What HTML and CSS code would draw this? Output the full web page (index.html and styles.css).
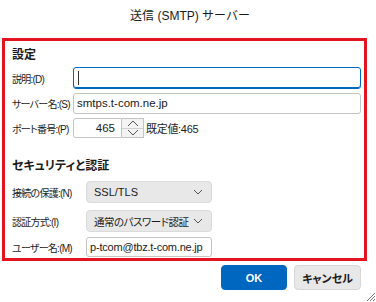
FILE: index.html
```html
<!DOCTYPE html>
<html lang="ja">
<head>
    <meta charset="UTF-8">
    <meta name="viewport" content="width=device-width, initial-scale=1.0">
    <title>送信 (SMTP) サーバー</title>
    <link rel="stylesheet" href="styles.css">
</head>
<body>
    <div class="dialog">
        <div class="title">送信 (SMTP) サーバー</div>

        <div class="panel">
            <div class="section-title">設定</div>

            <div class="row row-1">
                <label class="label">説明:(D)</label>
                <div class="input wide focused"><span class="caret"></span></div>
            </div>
            <div class="row row-2">
                <label class="label">サーバー名:(S)</label>
                <div class="input wide">smtps.t-com.ne.jp</div>
            </div>
            <div class="row row-3">
                <label class="label">ポート番号:(P)</label>
                <div class="input port">465</div>
                <div class="spinner">
                    <span class="spin-btn">
                        <svg width="12" height="7" viewBox="0 0 12 7"><path d="M1 6 L6 1 L11 6" fill="none" stroke="#555" stroke-width="1"/></svg>
                    </span>
                    <span class="spin-btn">
                        <svg width="12" height="7" viewBox="0 0 12 7"><path d="M1 1 L6 6 L11 1" fill="none" stroke="#555" stroke-width="1"/></svg>
                    </span>
                </div>
                <span class="default-port">既定値:465</span>
            </div>

            <div class="section-title second">セキュリティと認証</div>

            <div class="row row-sel">
                <label class="label label-long">接続の保護:(N)</label>
                <div class="select">
                    <span>SSL/TLS</span>
                    <svg class="chev" width="10" height="6" viewBox="0 0 10 6"><path d="M1 1 L5 5 L9 1" fill="none" stroke="#555" stroke-width="1"/></svg>
                </div>
            </div>
            <div class="row row-sel">
                <label class="label label-long">認証方式:(I)</label>
                <div class="select">
                    <span class="tight">通常のパスワード認証</span>
                    <svg class="chev" width="10" height="6" viewBox="0 0 10 6"><path d="M1 1 L5 5 L9 1" fill="none" stroke="#555" stroke-width="1"/></svg>
                </div>
            </div>
            <div class="row row-user">
                <label class="label label-long">ユーザー名:(M)</label>
                <div class="input user">p-tcom@tbz.t-com.ne.jp</div>
            </div>
        </div>

        <div class="buttons">
            <button class="btn btn-ok">OK</button>
            <button class="btn btn-cancel">キャンセル</button>
        </div>

        <svg class="grip" width="12" height="12" viewBox="0 0 12 12">
            <path d="M11 3 L3 11 M11 6 L6 11 M11 9 L9 11" stroke="#777" stroke-width="1"/>
        </svg>
    </div>
</body>
</html>
```

FILE: styles.css
```css
body {
    margin: 0;
    background-color: #fff;
    font-family: "Liberation Sans", "Noto Sans CJK JP", sans-serif;
    color: #1b1b1b;
}

.dialog {
    position: relative;
    width: 376px;
    height: 302px;
    background-color: #fff;
    overflow: hidden;
}

.title {
    height: 38px;
    line-height: 33px;
    text-align: center;
    font-size: 12px;
    padding-left: 4px;
    white-space: nowrap;
}

.panel {
    box-sizing: border-box;
    width: 365px;
    height: 223px;
    margin-left: 2px;
    border: 3px solid #e3141f;
    padding: 6px 0 0 7px;
}

.section-title {
    height: 16px;
    line-height: 16px;
    font-size: 12px;
    font-weight: bold;
    white-space: nowrap;
    font-feature-settings: "palt";
}

.section-title.second {
    margin-top: 20px;
}

.row {
    display: flex;
    align-items: center;
}

.row-1 { margin-top: 4px; height: 22px; }
.row-2 { margin-top: 4px; height: 21px; }
.row-3 { margin-top: 4px; height: 20px; }
.row-sel { margin-top: 7px; height: 22px; }
.row-user { margin-top: 5px; height: 20px; }

.label {
    width: 61px;
    flex-shrink: 0;
    font-size: 10px;
    letter-spacing: -0.75px;
    white-space: nowrap;
    font-feature-settings: "palt";
}

.label-long {
    width: 74px;
}

.input {
    box-sizing: border-box;
    height: 100%;
    border: 1px solid #c4c4c4;
    border-radius: 3px;
    font-size: 11.5px;
    line-height: 19px;
    padding: 0 3px;
    display: flex;
    align-items: center;
    white-space: nowrap;
    overflow: hidden;
}

.input.wide {
    width: 288px;
}

.input.focused {
    border: 1px solid #0067c0;
    box-shadow: inset 0 -1px 0 #0067c0;
}

.caret {
    width: 1px;
    height: 14px;
    background-color: #333;
    margin-left: 1px;
}

.input.port {
    width: 49px;
    justify-content: flex-end;
    padding-right: 6px;
    border-radius: 3px 0 0 3px;
}

.spinner {
    box-sizing: border-box;
    width: 22px;
    height: 100%;
    border: 1px solid #c4c4c4;
    border-left: none;
    display: flex;
    flex-direction: column;
}

.spin-btn {
    flex: 1;
    display: flex;
    align-items: center;
    justify-content: center;
    background-color: #f3f3f3;
}

.spin-btn + .spin-btn {
    border-top: 1px solid #d0d0d0;
}

.default-port {
    margin-left: 2px;
    font-size: 11px;
    letter-spacing: -0.3px;
    white-space: nowrap;
}

.select {
    box-sizing: border-box;
    width: 126px;
    height: 100%;
    background-color: #e8e8e8;
    border: 1px solid #dadada;
    border-radius: 4px;
    display: flex;
    align-items: center;
    justify-content: space-between;
    padding: 0 8px 0 7px;
    font-size: 11px;
    white-space: nowrap;
}

.select .tight {
    font-size: 10.5px;
    letter-spacing: -0.5px;
    font-feature-settings: "palt";
}

.chev {
    display: block;
    flex-shrink: 0;
}

.input.user {
    width: 126px;
    padding-left: 3px;
    font-size: 11px;
    letter-spacing: -0.2px;
}

.buttons {
    display: flex;
    justify-content: flex-end;
    gap: 7px;
    margin-top: 4px;
    padding-right: 15px;
}

.btn {
    height: 25px;
    padding: 0;
    border-radius: 4px;
    font-family: "Liberation Sans", "Noto Sans CJK JP", sans-serif;
    font-size: 11px;
    font-weight: bold;
    white-space: nowrap;
    cursor: pointer;
}

.btn-ok {
    width: 66px;
    background-color: #0067c0;
    border: 1px solid #0067c0;
    color: #fff;
}

.btn-cancel {
    width: 67px;
    background-color: #e8e8e8;
    border: 1px solid #d6d6d6;
    color: #1b1b1b;
    font-feature-settings: "palt";
}

.grip {
    position: absolute;
    right: 0;
    bottom: 0;
}
```
